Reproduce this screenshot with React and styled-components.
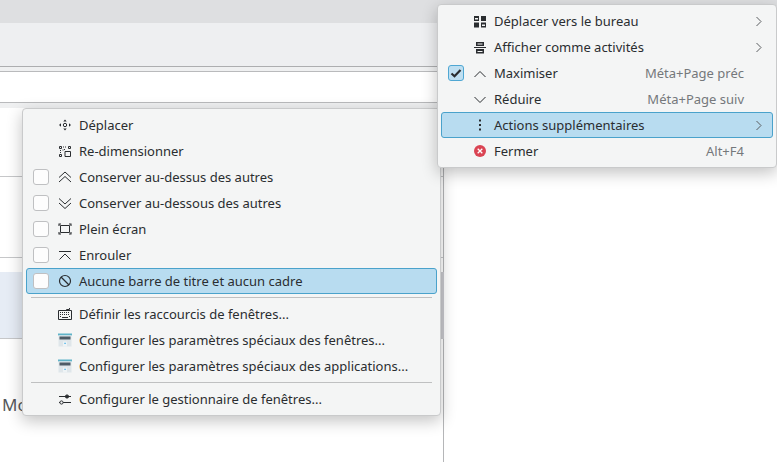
import React from "react";
import styled, { createGlobalStyle } from "styled-components";

const GlobalStyle = createGlobalStyle`
  html, body {
    margin: 0;
    padding: 0;
    background: #fff;
  }
  body {
    font-family: "Noto Sans", "DejaVu Sans", sans-serif;
    font-size: 13px;
    color: #2a2d30;
    overflow: hidden;
  }
`;

const Page = styled.div`
  position: relative;
  width: 777px;
  height: 462px;
  overflow: hidden;
  display: flex;
  flex-direction: column;
`;

const TitleBar = styled.div`
  height: 23px;
  flex: none;
  background: #dedfe1;
`;

const ToolBar = styled.div`
  height: 43px;
  flex: none;
  background: #eeeff1;
  border-bottom: 1px solid #adaeb0;
`;

const FieldStrip = styled.div`
  flex: none;
  background: #eff0f1;
  padding: 4px 0 5px;
`;

const Field = styled.div`
  height: 30px;
  background: #fff;
  border-top: 1px solid #b9babc;
  border-bottom: 1px solid #b9babc;
`;

const Body = styled.div`
  flex: 1;
  display: flex;
  min-height: 0;
`;

const ListColumn = styled.div`
  width: 444px;
  flex: none;
  box-sizing: border-box;
  border-right: 1px solid #b5b6b8;
  display: flex;
  flex-direction: column;
  background: #fff;
`;

const ListRow = styled.div`
  height: ${(p) => p.$height}px;
  flex: none;
  border-bottom: 1px solid ${(p) => (p.$plain ? "transparent" : "#c6c7c9")};
`;

const SelectedRow = styled.div`
  height: 66px;
  flex: none;
  margin-right: -1px;
  background: #e6ecf5;
  border-bottom: 1px solid #c6c7c9;
  border-right: 3px solid #c9c9ce;
`;

const ClippedLabel = styled.div`
  padding: 54px 0 0 2px;
  font-size: 17px;
  line-height: 24px;
  color: #55585b;
`;

const Menu = styled.div`
  position: absolute;
  left: ${(p) => p.$left}px;
  top: ${(p) => p.$top}px;
  width: ${(p) => p.$width}px;
  box-sizing: border-box;
  padding: 3px 3px;
  background: #f4f5f5;
  border: 1px solid #c9cacb;
  border-radius: 4px;
  box-shadow: 0 5px 16px rgba(0, 0, 0, 0.24);
`;

const Row = styled.div`
  height: 26px;
  box-sizing: border-box;
  display: flex;
  align-items: center;
  padding: 0 5px 0 6px;
  border: 1px solid ${(p) => (p.$active ? "#4aa2cb" : "transparent")};
  border-radius: 3px;
  background: ${(p) => (p.$active ? "#b8dcf0" : "transparent")};
`;

const CheckSlot = styled.span`
  width: 16px;
  height: 16px;
  flex: none;
  margin-right: 8px;
`;

const CheckBox = styled.span`
  display: flex;
  align-items: center;
  justify-content: center;
  box-sizing: border-box;
  width: 16px;
  height: 16px;
  border: 1px solid ${(p) => (p.$checked ? "#4fa7d3" : "#bfc0c2")};
  border-radius: 3px;
  background: ${(p) => (p.$checked ? "#bfdff1" : "#fdfdfd")};
`;

const IconSlot = styled.span`
  width: 16px;
  height: 16px;
  flex: none;
  margin-right: 6px;
  display: flex;
  svg {
    display: block;
  }
`;

const Label = styled.span`
  flex: 1;
  white-space: nowrap;
  line-height: 18px;
`;

const Shortcut = styled.span`
  margin-right: 7px;
  white-space: nowrap;
  color: #75787b;
`;

const ArrowSlot = styled.span`
  width: 16px;
  height: 16px;
  flex: none;
`;

const Separator = styled.div`
  height: 1px;
  margin: 3px 5px;
  background: #bfc0c1;
`;

const Icon = ({ children }) => (
  <svg width="16" height="16" viewBox="0 0 16 16" fill="none" stroke="#2a2d30" strokeWidth="1">
    {children}
  </svg>
);

const desktopIcon = (
  <Icon>
    <path d="M2 3h5v5H2zM9 3h5v5H9zM2 9.5h5v5H2zM9 9.5h5v5H9z" fill="#2a2d30" stroke="none" />
    <path d="M3 5h3v1.5H3zM10 11.5h3V13h-3z" fill="#f4f5f5" stroke="none" />
  </Icon>
);

const activitiesIcon = (
  <Icon>
    <path d="M4 3h8v4H4zM2 8h12v1H2zM4 10h8v4.5H4z" fill="#2a2d30" stroke="none" />
    <path d="M5.5 4.5h5V5.5h-5zM5.5 12h5v1h-5z" fill="#f4f5f5" stroke="none" />
  </Icon>
);

const upIcon = (
  <Icon>
    <path d="M2.5 12L8 6.5l5.5 5.5" />
  </Icon>
);

const downIcon = (
  <Icon>
    <path d="M2.5 6L8 11.5 13.5 6" />
  </Icon>
);

const moreIcon = (
  <Icon>
    <path d="M7 2.5h2v2H7zM7 7h2v2H7zM7 11.5h2v2H7z" fill="#2a2d30" stroke="none" />
  </Icon>
);

const closeIcon = (
  <svg width="16" height="16" viewBox="0 0 16 16" fill="none">
    <circle cx="8" cy="8" r="6" fill="#da4453" />
    <path d="M5.7 5.7l4.6 4.6M10.3 5.7l-4.6 4.6" stroke="#fff" strokeWidth="1.3" />
  </svg>
);

const moveIcon = (
  <Icon>
    <path d="M8 2.5L6.3 4.5h3.4zM8 13.5l-1.7-2h3.4zM2 8l2-1.7v3.4zM14 8l-2-1.7v3.4z" fill="#2a2d30" stroke="none" />
    <circle cx="8" cy="8" r="1.7" />
  </Icon>
);

const resizeIcon = (
  <Icon>
    <path d="M2.5 3.5h2v2h-2zM11.5 3.5h2v2h-2zM2.5 11.5h2v2h-2zM8 8.5h5.5v5H8z" />
    <path d="M6 4h4M3.5 7v3M7.5 7V6M5.5 7h1" strokeDasharray="1 1" />
  </Icon>
);

const aboveIcon = (
  <Icon>
    <path d="M2 8.5L8 3l6 5.5M2 13L8 7.5l6 5.5" />
  </Icon>
);

const belowIcon = (
  <Icon>
    <path d="M2 3.5L8 9l6-5.5M2 8l6 5.5L14 8" />
  </Icon>
);

const fullscreenIcon = (
  <Icon>
    <path d="M2 5V3h2M12 3h2v2M14 11v2h-2M4 13H2v-2" strokeWidth="1.1" />
    <path d="M3.5 4.5h9v7h-9z" />
  </Icon>
);

const shadeIcon = (
  <Icon>
    <path d="M2 4.5h12M2.5 12.5L8 7l5.5 5.5" />
  </Icon>
);

const noBorderIcon = (
  <Icon>
    <circle cx="8" cy="8" r="5.5" strokeWidth="1.2" />
    <path d="M4 4l8 8" strokeWidth="1.2" />
  </Icon>
);

const keyboardIcon = (
  <Icon>
    <path d="M9.5 4.5V3.5h3V2" />
    <path d="M1.5 4.5h13v9h-13z" />
    <path d="M3 6.5h10M3 8.5h10" strokeDasharray="1 1" />
    <path d="M3 10.5h1M5 11.5h6M12 10.5h1" />
  </Icon>
);

const windowRulesIcon = (
  <svg width="16" height="16" viewBox="0 0 16 16" fill="none">
    <path d="M1 1.5h14v2H1z" fill="#5fb3c8" />
    <path d="M1.5 3.5h13v11h-13z" fill="#dfe6ea" />
    <path d="M2.5 4.5h11v3h-11z" fill="#4d5b66" />
    <path d="M6 9.5h4v5H6z" fill="#eef3f5" />
    <path d="M7.4 10.8h1.3v1.3H7.4z" fill="#3daee9" />
  </svg>
);

const configureIcon = (
  <Icon>
    <path d="M2 5.5h12M2 11.5h12" />
    <circle cx="10" cy="5.5" r="1.6" fill="#2a2d30" />
    <circle cx="4.5" cy="11.5" r="1.6" fill="#f4f5f5" />
  </Icon>
);

const tick = (
  <svg width="12" height="12" viewBox="0 0 12 12" fill="none" stroke="#2a2d30" strokeWidth="2.2">
    <path d="M1.5 6.5L4.5 9.2 10.5 3" />
  </svg>
);

const arrow = (
  <svg width="16" height="16" viewBox="0 0 16 16" fill="none" stroke="#5a5d60" strokeWidth="1">
    <path d="M5.5 4L10 8.5 5.5 13" />
  </svg>
);

const MenuRow = ({ icon, label, shortcut, check, active, sub }) => (
  <Row $active={active}>
    <CheckSlot>
      {check && <CheckBox $checked={check === "on"}>{check === "on" && tick}</CheckBox>}
    </CheckSlot>
    <IconSlot>{icon}</IconSlot>
    <Label>{label}</Label>
    {shortcut && <Shortcut>{shortcut}</Shortcut>}
    <ArrowSlot>{sub && arrow}</ArrowSlot>
  </Row>
);

export default function App() {
  return (
    <Page>
      <GlobalStyle />
      <TitleBar />
      <ToolBar />
      <FieldStrip>
        <Field />
      </FieldStrip>
      <Body>
        <ListColumn>
          <ListRow $height={68} />
          <ListRow $height={80} />
          <ListRow $height={13} $plain />
          <SelectedRow />
          <ClippedLabel>Mo</ClippedLabel>
        </ListColumn>
      </Body>

      <Menu $left={22} $top={108} $width={419}>
        <MenuRow icon={moveIcon} label="Déplacer" />
        <MenuRow icon={resizeIcon} label="Re-dimensionner" />
        <MenuRow check="off" icon={aboveIcon} label="Conserver au-dessus des autres" />
        <MenuRow check="off" icon={belowIcon} label="Conserver au-dessous des autres" />
        <MenuRow check="off" icon={fullscreenIcon} label="Plein écran" />
        <MenuRow check="off" icon={shadeIcon} label="Enrouler" />
        <MenuRow check="off" active icon={noBorderIcon} label="Aucune barre de titre et aucun cadre" />
        <Separator />
        <MenuRow icon={keyboardIcon} label="Définir les raccourcis de fenêtres..." />
        <MenuRow icon={windowRulesIcon} label="Configurer les paramètres spéciaux des fenêtres..." />
        <MenuRow icon={windowRulesIcon} label="Configurer les paramètres spéciaux des applications..." />
        <Separator />
        <MenuRow icon={configureIcon} label="Configurer le gestionnaire de fenêtres..." />
      </Menu>

      <Menu $left={437} $top={4} $width={340}>
        <MenuRow icon={desktopIcon} label="Déplacer vers le bureau" sub />
        <MenuRow icon={activitiesIcon} label="Afficher comme activités" sub />
        <MenuRow check="on" icon={upIcon} label="Maximiser" shortcut="Méta+Page préc" />
        <MenuRow icon={downIcon} label="Réduire" shortcut="Méta+Page suiv" />
        <MenuRow active icon={moreIcon} label="Actions supplémentaires" sub />
        <MenuRow icon={closeIcon} label="Fermer" shortcut="Alt+F4" />
      </Menu>
    </Page>
  );
}
